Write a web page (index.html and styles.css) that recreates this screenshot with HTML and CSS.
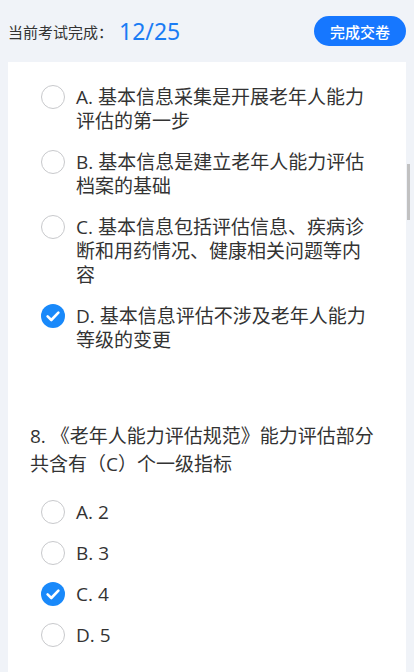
FILE: index.html
```html
<!DOCTYPE html>
<html lang="zh-CN">
<head>
<meta charset="utf-8">
<title>考试</title>
<link rel="stylesheet" href="styles.css">
</head>
<body>
<header class="topbar">
  <div class="progress">
    <span class="progress-label">当前考试完成：</span>
    <span class="progress-num">12/25</span>
  </div>
  <button class="submit-btn">完成交卷</button>
</header>
<main class="card">
  <section class="question">
    <ul class="options">
      <li class="option"><span class="radio"></span><span class="opt-text">A. 基本信息采集是开展老年人能力评估的第一步</span></li>
      <li class="option"><span class="radio"></span><span class="opt-text">B. 基本信息是建立老年人能力评估档案的基础</span></li>
      <li class="option"><span class="radio"></span><span class="opt-text">C. 基本信息包括评估信息、疾病诊断和用药情况、健康相关问题等内容</span></li>
      <li class="option"><span class="radio checked"><svg viewBox="0 0 24 24" width="24" height="24"><circle cx="12" cy="12" r="12" fill="#1989fa"/><path d="M6.6 12.4 L10.3 16 L17.4 8.6" fill="none" stroke="#fff" stroke-width="2.6" stroke-linecap="round" stroke-linejoin="round"/></svg></span><span class="opt-text">D. 基本信息评估不涉及老年人能力等级的变更</span></li>
    </ul>
  </section>
  <section class="question">
    <p class="q-title">8. 《老年人能力评估规范》能力评估部分共含有（C）个一级指标</p>
    <ul class="options">
      <li class="option"><span class="radio"></span><span class="opt-text">A. 2</span></li>
      <li class="option"><span class="radio"></span><span class="opt-text">B. 3</span></li>
      <li class="option"><span class="radio checked"><svg viewBox="0 0 24 24" width="24" height="24"><circle cx="12" cy="12" r="12" fill="#1989fa"/><path d="M6.6 12.4 L10.3 16 L17.4 8.6" fill="none" stroke="#fff" stroke-width="2.6" stroke-linecap="round" stroke-linejoin="round"/></svg></span><span class="opt-text">C. 4</span></li>
      <li class="option"><span class="radio"></span><span class="opt-text">D. 5</span></li>
    </ul>
  </section>
</main>
<div class="scrollbar"></div>
</body>
</html>
```
FILE: styles.css
```css
html, body {
  margin: 0;
  padding: 0;
  height: 100%;
  overflow: hidden;
}
body {
  background: #f0f3f8;
  font-family: "Open Sans", "Noto Sans CJK SC", sans-serif;
  color: #333;
}
.topbar {
  height: 62px;
  display: flex;
  align-items: center;
  justify-content: space-between;
  padding: 0 8px;
  box-sizing: border-box;
}
.progress {
  display: flex;
  align-items: center;
  gap: 6px;
}
.progress-label {
  font-family: "Noto Sans CJK SC", sans-serif;
  font-size: 15px;
  color: #333;
}
.progress-num {
  font-size: 23px;
  color: #1a7cf4;
  font-family: "Noto Sans", sans-serif;
}
.submit-btn {
  width: 92px;
  height: 30px;
  border: none;
  border-radius: 15px;
  background: #1677ff;
  color: #fff;
  font-family: "Noto Sans CJK SC", sans-serif;
  font-size: 15px;
  font-weight: 500;
  padding: 0;
}
.card {
  background: #fff;
  margin: 0 8px;
  padding: 23px 30px 40px 22px;
  min-height: 700px;
}
.question + .question {
  margin-top: 70px;
}
.q-title {
  margin: 0 0 22px;
  font-size: 19px;
  line-height: 28px;
}
.options {
  list-style: none;
  margin: 0;
  padding: 0 0 0 11px;
}
.option {
  display: flex;
  align-items: flex-start;
  gap: 11px;
  margin-bottom: 17px;
  font-size: 19px;
  line-height: 24px;
}
.radio {
  flex: none;
  width: 24px;
  height: 24px;
  box-sizing: border-box;
  border: 1px solid #c8c9cc;
  border-radius: 50%;
}
.radio.checked {
  border: none;
}
.radio svg {
  display: block;
}
.opt-text {
  flex: 1;
}
.scrollbar {
  position: absolute;
  left: 407px;
  top: 164px;
  width: 3px;
  height: 56px;
  background: #c1c1c1;
}
```
